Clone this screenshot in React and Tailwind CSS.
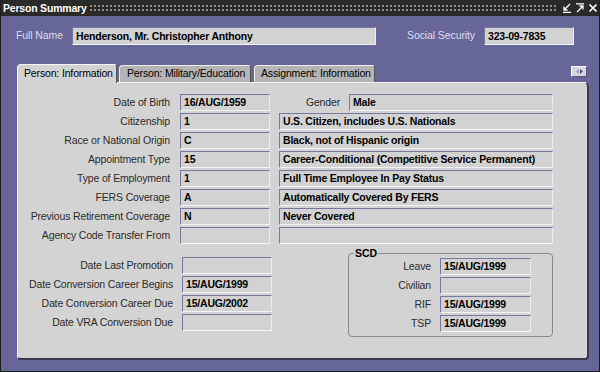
import React from 'react';

const font = "font-['Liberation_Sans',Arial,sans-serif]";

function Field({ value, className = '' }) {
  return (
    <div
      className={`h-[17px] shrink-0 bg-[#d2d2d2] border border-t-[#77779f] border-l-[#77779f] border-b-[#f4f4f4] border-r-[#ececec] pl-[3px] text-[10.5px] tracking-[-0.2px] leading-[15px] font-bold text-black whitespace-nowrap overflow-hidden ${className}`}
    >
      {value}
    </div>
  );
}

function Label({ children, className = '' }) {
  return (
    <div className={`shrink-0 text-right text-[10.5px] tracking-[-0.15px] leading-[17px] text-[#2b2b2b] whitespace-nowrap ${className}`}>
      {children}
    </div>
  );
}

const rows = [
  ['Citizenship', '1', 'U.S. Citizen, includes U.S. Nationals'],
  ['Race or National Origin', 'C', 'Black, not of Hispanic origin'],
  ['Appointment Type', '15', 'Career-Conditional (Competitive Service Permanent)'],
  ['Type of Employment', '1', 'Full Time Employee In Pay Status'],
  ['FERS Coverage', 'A', 'Automatically Covered By FERS'],
  ['Previous Retirement Coverage', 'N', 'Never Covered'],
  ['Agency Code Transfer From', '', ''],
];

const dates = [
  ['Date Last Promotion', ''],
  ['Date Conversion Career Begins', '15/AUG/1999'],
  ['Date Conversion Career Due', '15/AUG/2002'],
  ['Date VRA Conversion Due', ''],
];

const scd = [
  ['Leave', '15/AUG/1999'],
  ['Civilian', ''],
  ['RIF', '15/AUG/1999'],
  ['TSP', '15/AUG/1999'],
];

const tabText = 'text-[10.5px] tracking-[-0.15px] text-black whitespace-nowrap';

export default function App() {
  return (
    <div className={`${font} w-[600px] h-[372px] bg-[#666699] border-l border-r border-b border-[#1e1e1e] flex flex-col overflow-hidden`}>
      {/* Title bar */}
      <div className="h-[16px] shrink-0 bg-[#2a2a2a] flex items-center">
        <span className="pl-[2px] text-[10.5px] tracking-[-0.2px] font-bold text-white leading-[16px] w-[88px] shrink-0 whitespace-nowrap">Person Summary</span>
        <div className="h-[9px] w-[468px] shrink-0 bg-[radial-gradient(#8a8a8a_0.9px,transparent_1.1px)] bg-[length:4px_4px] bg-[position:0_0]" />
        <div className="ml-[5px] flex items-center gap-[3px] text-white">
          <svg width="10" height="10" viewBox="0 0 10 10" fill="none" stroke="white" strokeWidth="1.3">
            <path d="M8 1 L2 7 M2 3.5 V7 H5.5 M1 9.3 H9" />
          </svg>
          <svg width="10" height="10" viewBox="0 0 10 10" fill="none" stroke="white" strokeWidth="1.3">
            <path d="M1 0.8 H9 M2 9 L8 3 M4.5 3 H8 V6.5" />
          </svg>
          <svg width="10" height="10" viewBox="0 0 10 10" fill="none" stroke="white" strokeWidth="1.7">
            <path d="M1.5 1.5 L8.5 8.5 M8.5 1.5 L1.5 8.5" />
          </svg>
        </div>
      </div>

      {/* Header fields */}
      <div className="mt-[11px] h-[18px] flex items-center pl-[15px]">
        <span className="w-[56px] shrink-0 text-[10.5px] tracking-[-0.1px] text-[#dedef0] whitespace-nowrap">Full Name</span>
        <Field value="Henderson, Mr. Christopher Anthony" className="w-[304px] !h-[18px] leading-[16px]" />
        <span className="w-[108px] shrink-0 text-right pr-[9px] text-[10.5px] tracking-[-0.1px] text-[#dedef0] whitespace-nowrap">Social Security</span>
        <Field value="323-09-7835" className="w-[90px] !h-[18px] leading-[16px]" />
      </div>

      {/* Tabs */}
      <div className="mt-[19px] h-[18px] flex items-end pl-[16px] relative z-10">
        <div className={`h-[19px] w-[100px] shrink-0 bg-[#d3d3d3] border-t border-l border-[#f4f4f4] border-r border-r-[#555] rounded-tl-[4px] rounded-tr-[3px] pl-[6px] leading-[16px] -mb-[1px] ${tabText}`}>
          Person: Information
        </div>
        <div className={`ml-[2px] h-[17px] w-[132px] shrink-0 bg-[#b4b4b4] border-t border-l border-[#eeeeee] border-r border-r-[#555] rounded-tl-[4px] rounded-tr-[3px] pl-[7px] leading-[15px] ${tabText}`}>
          Person: Military/Education
        </div>
        <div className={`ml-[3px] h-[17px] w-[121px] shrink-0 bg-[#b4b4b4] border-t border-l border-[#eeeeee] border-r border-r-[#555] rounded-tl-[4px] rounded-tr-[3px] pl-[6px] leading-[15px] ${tabText}`}>
          Assignment: Information
        </div>
        <div className="ml-auto mr-[12px] self-start mt-[2px] w-[16px] h-[11px] bg-[#d6d6de] border border-t-white border-l-white border-r-[#55557a] border-b-[#55557a] flex items-center justify-center gap-[1px]">
          <svg width="3" height="5" viewBox="0 0 3 5"><path d="M3 0 L0 2.5 L3 5 Z" fill="#9a9ab4" /></svg>
          <svg width="3" height="5" viewBox="0 0 3 5"><path d="M0 0 L3 2.5 L0 5 Z" fill="#4c4c9a" /></svg>
        </div>
      </div>

      {/* Panel */}
      <div className="ml-[16px] w-[572px] h-[278px] bg-[#d3d3d3] border-t border-l border-[#f4f4f4] border-r-2 border-b-2 border-r-[#3a3a4a] border-b-[#3a3a4a] rounded-tr-[5px] rounded-b-[4px] pt-[11px]">
        <div className="flex flex-col gap-[2px]">
          <div className="flex items-center">
            <Label className="w-[152px]">Date of Birth</Label>
            <Field value="16/AUG/1959" className="ml-[10px] w-[90px]" />
            <Label className="w-[70px]">Gender</Label>
            <Field value="Male" className="ml-[9px] w-[204px]" />
          </div>
          {rows.map(([label, code, desc]) => (
            <div key={label} className="flex items-center">
              <Label className="w-[152px]">{label}</Label>
              <Field value={code} className="ml-[10px] w-[90px]" />
              <Field value={desc} className="ml-[9px] w-[274px]" />
            </div>
          ))}
        </div>

        <div className="mt-[9px] flex">
          <div className="pt-[4px] flex flex-col gap-[2px]">
            {dates.map(([label, value]) => (
              <div key={label} className="flex items-center">
                <Label className="w-[155px]">{label}</Label>
                <Field value={value} className="ml-[9px] w-[90px]" />
              </div>
            ))}
          </div>

          <div className="ml-[76px] w-[205px] h-[84px] border border-[#8a8a8a] rounded-[4px] relative pt-[4px]">
            <span className="absolute left-[5px] -top-[8px] bg-[#d3d3d3] px-[1px] text-[10.5px] font-bold leading-[14px] text-black">SCD</span>
            <div className="flex flex-col gap-[2px]">
              {scd.map(([label, value]) => (
                <div key={label} className="flex items-center">
                  <Label className="w-[82px]">{label}</Label>
                  <Field value={value} className="ml-[9px] w-[91px]" />
                </div>
              ))}
            </div>
          </div>
        </div>
      </div>
    </div>
  );
}
